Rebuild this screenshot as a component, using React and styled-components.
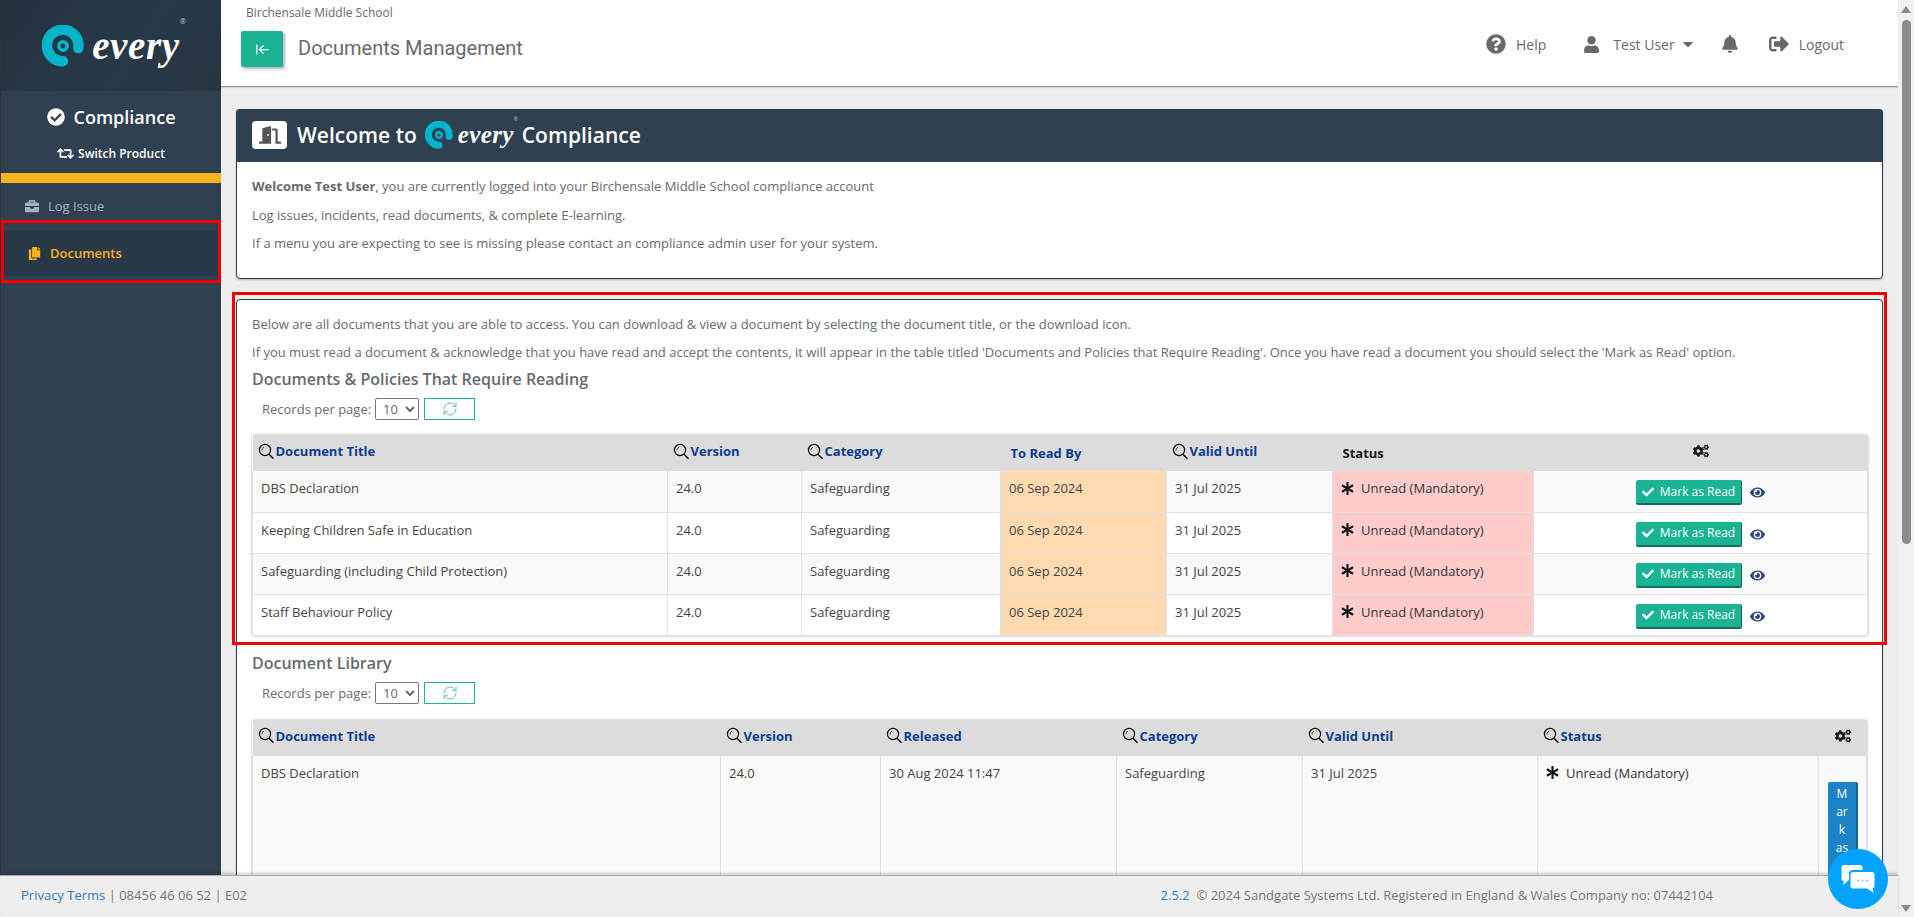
import React from 'react'
import styled, { createGlobalStyle } from 'styled-components'
import {
  FaQuestionCircle, FaUser, FaBell, FaSignOutAlt, FaCheckCircle, FaRetweet,
  FaBriefcase, FaCopy, FaCogs, FaAsterisk, FaCheck, FaEye, FaDoorOpen, FaCaretDown,
} from 'react-icons/fa'
import { ArrowLeftToLine, RefreshCw } from 'lucide-react'

const GlobalStyle = createGlobalStyle`
  html, body { margin: 0; height: 100%; overflow: hidden; }
  body { font-family: "Open Sans", "Liberation Sans", sans-serif; font-size: 13px; color: #676a6c; }
  * { box-sizing: border-box; }
`

const Shell = styled.div`
  display: flex;
  height: 917px;
  background: #eeeeee;
`
const Page = styled.div`
  flex: 1;
  min-width: 0;
  display: flex;
  flex-direction: column;
  position: relative;
`
const Body = styled.div`
  flex: 1;
  min-height: 0;
  display: flex;
`

/* sidebar */
const Sidebar = styled.aside`
  width: 221px;
  flex: none;
  background: #2f4050;
  color: #fff;
  border-left: 1px solid #333;
`
const LogoBlock = styled.div`
  height: 91px;
  background: linear-gradient(125deg, #24323f 0%, #293948 60%, #26343f 100%);
  display: flex;
  align-items: center;
  justify-content: center;
`
const LogoRow = styled.span`
  display: inline-flex;
  align-items: center;
  gap: ${p => p.$size * 0.2}px;
`
const LogoWord = styled.span`
  font-family: "Liberation Serif", serif;
  font-style: italic;
  font-weight: 700;
  font-size: ${p => p.$size}px;
  line-height: 1;
  letter-spacing: ${p => p.$size * 0.015}px;
  color: #fff;
  position: relative;
`
const LogoMarkR = styled.span`
  position: absolute;
  left: 100%;
  top: ${p => p.$size * -0.2}px;
  font-size: ${p => p.$size * 0.2}px;
  font-family: "Open Sans", sans-serif;
  font-style: normal;
  font-weight: 400;
  color: #b8c2cc;
`
const ProductBlock = styled.div`
  height: 82px;
  padding-top: 14px;
  text-align: center;
`
const ProductName = styled.div`
  display: flex;
  align-items: center;
  justify-content: center;
  gap: 9px;
  font-size: 18px;
  font-weight: 600;
  line-height: 24px;
`
const SwitchLink = styled.div`
  display: flex;
  align-items: center;
  justify-content: center;
  gap: 4px;
  margin-top: 16px;
  font-size: 12px;
  font-weight: 600;
  line-height: 16px;
`
const YellowBar = styled.div`
  height: 10px;
  background: #fbb21b;
`
const NavItem = styled.div`
  position: relative;
  height: ${p => (p.$active ? 46 : 47)}px;
  display: flex;
  align-items: center;
  gap: 9px;
  padding-left: 24px;
  padding-bottom: ${p => (p.$active ? 0 : 2)}px;
  font-size: 13px;
  font-weight: ${p => (p.$active ? 600 : 400)};
  color: ${p => (p.$active ? '#fbb21b' : '#a7b1c2')};
  background: ${p => (p.$active ? '#293846' : 'transparent')};
  border-left: ${p => (p.$active ? '1px solid #fbb21b' : 'none')};
  margin-left: ${p => (p.$active ? 2 : 0)}px;
`
const Highlight = styled.div`
  position: absolute;
  top: ${p => p.$top}px;
  left: ${p => p.$left}px;
  right: ${p => p.$right}px;
  bottom: ${p => p.$bottom}px;
  border: 3px solid #f00000;
  pointer-events: none;
`

/* header */
const Main = styled.div`
  flex: 1;
  min-width: 0;
  display: flex;
  flex-direction: column;
`
const TopBar = styled.header`
  height: 87px;
  flex: none;
  background: #fff;
  border-bottom: 1px solid #999;
  box-shadow: 0 1px 1px rgba(0, 0, 0, 0.12);
  padding: 4px 0 0 25px;
  display: flex;
  justify-content: space-between;
`
const School = styled.div`
  font-size: 12px;
  line-height: 17px;
`
const TitleRow = styled.div`
  display: flex;
  align-items: center;
  gap: 15px;
  margin: 10px 0 0 -5px;
`
const ToggleButton = styled.div`
  width: 42px;
  height: 36px;
  border-radius: 2px;
  background: #1ab394;
  color: #fff;
  display: flex;
  align-items: center;
  justify-content: center;
  box-shadow: 2px 2px 3px rgba(0, 0, 0, 0.3);
`
const PageTitle = styled.h1`
  margin: 0;
  padding-bottom: 2px;
  font-family: Roboto, sans-serif;
  font-size: 20px;
  font-weight: 400;
  color: #676a6c;
`
const UserNav = styled.nav`
  display: flex;
  align-items: center;
  height: 80px;
  padding-right: 54px;
  font-size: 14px;
  color: #676a6c;
`
const UserLink = styled.span`
  display: flex;
  align-items: center;
  gap: ${p => p.$gap}px;
  margin-left: ${p => p.$ml}px;
  svg { flex: none; }
`
const Caret = styled(FaCaretDown)`
  margin-left: -8px;
`

/* content */
const Content = styled.main`
  flex: 1;
  min-height: 0;
  overflow: hidden;
  padding: 22px 15px 0;
`
const Card = styled.section`
  background: #fff;
  border: 1px solid #2f4050;
  border-radius: 4px;
  box-shadow: 0 1px 2px rgba(0, 0, 0, 0.25);
  margin-bottom: 20px;
`
const CardHead = styled.div`
  height: 53px;
  margin: -1px -1px 0;
  background: #2f4050;
  border-radius: 4px 4px 0 0;
  color: #fff;
  display: flex;
  align-items: center;
  padding: 0 0 2px 16px;
  gap: 8px;
  font-size: 21px;
  font-weight: 600;
`
const DoorTile = styled.span`
  width: 35px;
  height: 28px;
  margin-right: 2px;
  background: #fff;
  border-radius: 4px;
  color: #555;
  display: flex;
  align-items: center;
  justify-content: center;
`
const WelcomeBody = styled.div`
  padding: 15px 15px 0;
  height: 116px;
`
const Para = styled.p`
  margin: 0 0 ${p => p.$mb ?? 10.5}px;
  line-height: 18px;
  color: #676a6c;
  b { font-weight: 700; }
`
const DocsBody = styled.div`
  padding: 15px 15px 0;
`
const HighlightZone = styled.div`
  position: relative;
`
const SectionTitle = styled.h3`
  margin: ${p => p.$mt}px 0 0;
  font-size: 16px;
  line-height: 22px;
  font-weight: 600;
  color: #676a6c;
`
const Toolbar = styled.div`
  display: flex;
  align-items: center;
  height: 22px;
  margin: 8px 0 ${p => p.$mb}px 10px;
  font-size: 13px;
`
const PerPage = styled.select`
  width: 44px;
  height: 22px;
  margin: 0 5px 0 4px;
  padding: 0 0 0 3px;
  background: #fff;
  border: 1px solid #777;
  border-radius: 2px;
  color: #676a6c;
  font: 13px "Open Sans", sans-serif;
`
const RefreshButton = styled.div`
  width: 51px;
  height: 22px;
  border: 1px solid #1ab394;
  display: flex;
  align-items: center;
  justify-content: center;
  color: #62c3a8;
`
const Table = styled.table`
  width: 100%;
  table-layout: fixed;
  border-collapse: collapse;
  box-shadow: 0 0 3px rgba(0, 0, 0, 0.3);
  border-radius: 3px;
`
const HeadCell = styled.th`
  height: 36px;
  padding: 0 5px;
  background: #dcdcdc;
  text-align: ${p => (p.$center ? 'center' : 'left')};
  font-size: 13px;
  font-weight: 700;
  color: ${p => (p.$plain ? '#1a1a1a' : '#0b3d91')};
  white-space: nowrap;
`
const HeadLabel = styled.span`
  display: inline-flex;
  align-items: center;
  gap: 1px;
  padding-left: ${p => (p.$indent ? 5 : 0)}px;
`
const Row = styled.tr`
  background: ${p => (p.$odd ? '#f9f9f9' : '#fff')};
`
const Cell = styled.td`
  height: ${p => p.$h}px;
  padding: 8px 8px 0;
  vertical-align: top;
  border: 1px solid #e1e1e1;
  border-top: 0;
  font-size: 13px;
  line-height: 18px;
  color: #444;
  background: ${p => p.$tint || 'transparent'};
`
const StatusText = styled.span`
  display: flex;
  align-items: center;
  gap: 7px;
  color: #333;
`
const ActionWrap = styled.div`
  display: flex;
  align-items: center;
  justify-content: center;
  gap: 8px;
  margin-top: 1px;
  color: #2f4a7a;
`
const MarkButton = styled.span`
  display: inline-flex;
  align-items: center;
  gap: 6px;
  height: 25px;
  padding: 0 6px;
  background: #1ab394;
  border-bottom: 2px solid #12705c;
  border-right: 1px solid #12705c;
  border-radius: 2px;
  color: #fff;
  font-size: 12px;
`
const NarrowButton = styled.span`
  display: block;
  width: 30px;
  margin: 18px 0 0 1px;
  padding: 3px 6px 0;
  background: #1c84c6;
  border-right: 2px solid #14608f;
  border-radius: 2px;
  color: #fff;
  font-size: 12px;
  line-height: 18px;
  text-align: center;
  word-break: break-all;
`

/* footer */
const Footer = styled.footer`
  height: 42px;
  flex: none;
  display: flex;
  align-items: center;
  justify-content: space-between;
  padding: 0 185px 3px 21px;
  background: #eeeeee;
  border-top: 1px solid #aaa;
  box-shadow: 0 -2px 3px rgba(0, 0, 0, 0.18);
  border-bottom-left-radius: 6px;
  font-size: 13px;
  color: #777;
  z-index: 1;
`
const FootLink = styled.span`
  color: #337ab7;
`
const ChatBubble = styled.div`
  position: absolute;
  right: 10px;
  bottom: 8px;
  width: 60px;
  height: 60px;
  border-radius: 50%;
  background: #03a2fd;
  display: flex;
  align-items: center;
  justify-content: center;
  z-index: 2;
`

/* window scrollbar drawn at the right edge */
const Scrollbar = styled.div`
  width: 16px;
  flex: none;
  background: #f1f1f1;
  display: flex;
  flex-direction: column;
  align-items: center;
  padding-top: 6px;
`
const Arrow = styled.span`
  width: 0;
  height: 0;
  border-left: 5px solid transparent;
  border-right: 5px solid transparent;
  border-bottom: ${p => (p.$down ? '0' : '7px solid #8a8a8a')};
  border-top: ${p => (p.$down ? '7px solid #8a8a8a' : '0')};
  margin-top: ${p => (p.$down ? 'auto' : '0')};
  margin-bottom: ${p => (p.$down ? '5px' : '0')};
`
const Thumb = styled.div`
  width: 9px;
  height: 524px;
  margin-top: 7px;
  border-radius: 5px;
  background: #8c8c8c;
`

function LogoMark({ size }) {
  return (
    <svg width={size} height={size} viewBox="0 0 40 40" fill="none">
      <path d="M34.5 22 A15 15 0 1 0 20 34.5" stroke="#00b4cc" strokeWidth="10" strokeLinecap="round" />
      <circle cx="20" cy="20" r="4" stroke="#00b4cc" strokeWidth="3.4" />
    </svg>
  )
}

function EveryLogo({ mark, size }) {
  return (
    <LogoRow $size={size}>
      <LogoMark size={mark} />
      <LogoWord $size={size}>every<LogoMarkR $size={size}>®</LogoMarkR></LogoWord>
    </LogoRow>
  )
}

function Magnifier() {
  return (
    <svg width="17" height="17" viewBox="0 0 17 17" fill="none" stroke="#111">
      <circle cx="7" cy="7" r="5.6" strokeWidth="1.2" />
      <path d="M11 11.2 L15.5 15.7" strokeWidth="1.6" />
      <path d="M4 7.5 C4 6 4.8 4.8 6 4.2" strokeWidth="0.8" />
    </svg>
  )
}

function ChatIcon() {
  return (
    <svg width="34" height="30" viewBox="0 0 34 30">
      <path d="M3 1 H19 a2.500 2.500 0 0 1 2.500 2.500 V6 H12 a4 4 0 0 0 -4 4 V16 L2 21 L3 17 a2.500 2.500 0 0 1 -2.500 -2.500 V3.500 A2.500 2.500 0 0 1 3 1 Z" fill="#fff" />
      <path d="M12 8 H31 a2.500 2.500 0 0 1 2.500 2.500 V22 a2.500 2.500 0 0 1 -2 2.400 L33 29 L26 24.500 H12 a2.500 2.500 0 0 1 -2.500 -2.500 V10.500 A2.500 2.500 0 0 1 12 8 Z" fill="#fff" />
      <circle cx="17" cy="16.500" r="1" fill="#6cc4f7" />
      <circle cx="21.500" cy="16.500" r="1" fill="#6cc4f7" />
      <circle cx="26" cy="16.500" r="1" fill="#6cc4f7" />
    </svg>
  )
}

function RecordsBar({ gapBelow }) {
  return (
    <Toolbar $mb={gapBelow}>
      Records per page:
      <PerPage defaultValue="10">
        <option>10</option>
      </PerPage>
      <RefreshButton><RefreshCw size={16} strokeWidth={1.5} /></RefreshButton>
    </Toolbar>
  )
}

function Head({ children, search = true }) {
  return (
    <HeadLabel $indent={!search}>
      {search && <Magnifier />}
      {children}
    </HeadLabel>
  )
}

const requiredDocs = [
  'DBS Declaration',
  'Keeping Children Safe in Education',
  'Safeguarding (including Child Protection)',
  'Staff Behaviour Policy',
]

function Unread() {
  return (
    <StatusText>
      <FaAsterisk size={13} color="#111" />
      Unread (Mandatory)
    </StatusText>
  )
}

export default function App() {
  return (
    <Shell>
      <GlobalStyle />
      <Page>
        <Body>
          <Sidebar>
            <LogoBlock><EveryLogo mark={42} size={39} /></LogoBlock>
            <ProductBlock>
              <ProductName><FaCheckCircle size={18} />Compliance</ProductName>
              <SwitchLink><FaRetweet size={17} />Switch Product</SwitchLink>
            </ProductBlock>
            <YellowBar />
            <NavItem><FaBriefcase size={14} />Log Issue</NavItem>
            <NavItem $active>
              <FaCopy size={13} />Documents
              <Highlight $top={-10} $left={-3} $right={0} $bottom={-7} />
            </NavItem>
          </Sidebar>
          <Main>
            <TopBar>
              <div>
                <School>Birchensale Middle School</School>
                <TitleRow>
                  <ToggleButton><ArrowLeftToLine size={15} strokeWidth={2} /></ToggleButton>
                  <PageTitle>Documents Management</PageTitle>
                </TitleRow>
              </div>
              <UserNav>
                <UserLink $gap={10} $ml={0}><FaQuestionCircle size={20} />Help</UserLink>
                <UserLink $gap={13} $ml={37}><FaUser size={17} />Test User<Caret size={16} /></UserLink>
                <UserLink $gap={0} $ml={25}><FaBell size={18} /></UserLink>
                <UserLink $gap={10} $ml={30}><FaSignOutAlt size={20} />Logout</UserLink>
              </UserNav>
            </TopBar>
            <Content>
              <Card>
                <CardHead>
                  <DoorTile><FaDoorOpen size={22} /></DoorTile>
                  Welcome to
                  <EveryLogo mark={28} size={25} />
                  Compliance
                </CardHead>
                <WelcomeBody>
                  <Para><b>Welcome Test User</b>, you are currently logged into your Birchensale Middle School compliance account</Para>
                  <Para>Log issues, incidents, read documents, &amp; complete E-learning.</Para>
                  <Para>If a menu you are expecting to see is missing please contact an compliance admin user for your system.</Para>
                </WelcomeBody>
              </Card>
              <Card>
                <DocsBody>
                  <HighlightZone>
                    <Highlight $top={-23} $left={-20} $right={-20} $bottom={-9} />
                    <Para $mb={10}>Below are all documents that you are able to access. You can download &amp; view a document by selecting the document title, or the download icon.</Para>
                    <Para $mb={0}>If you must read a document &amp; acknowledge that you have read and accept the contents, it will appear in the table titled 'Documents and Policies that Require Reading'. Once you have read a document you should select the 'Mark as Read' option.</Para>
                    <SectionTitle $mt={7}>Documents &amp; Policies That Require Reading</SectionTitle>
                    <RecordsBar gapBelow={15} />
                    <Table>
                      <colgroup>
                        {[415, 134, 199, 166, 166, 201, 334].map(w => <col key={w} width={w} />)}
                      </colgroup>
                      <thead>
                        <tr>
                          <HeadCell><Head>Document Title</Head></HeadCell>
                          <HeadCell><Head>Version</Head></HeadCell>
                          <HeadCell><Head>Category</Head></HeadCell>
                          <HeadCell><Head search={false}>To Read By</Head></HeadCell>
                          <HeadCell><Head>Valid Until</Head></HeadCell>
                          <HeadCell $plain><Head search={false}>Status</Head></HeadCell>
                          <HeadCell $plain $center><FaCogs size={16} /></HeadCell>
                        </tr>
                      </thead>
                      <tbody>
                        {requiredDocs.map((title, i) => (
                          <Row key={title} $odd={i % 2 === 0}>
                            <Cell $h={41}>{title}</Cell>
                            <Cell $h={41}>24.0</Cell>
                            <Cell $h={41}>Safeguarding</Cell>
                            <Cell $h={41} $tint="#ffd9b0">06 Sep 2024</Cell>
                            <Cell $h={41}>31 Jul 2025</Cell>
                            <Cell $h={41} $tint="#ffcccc"><Unread /></Cell>
                            <Cell $h={41}>
                              <ActionWrap>
                                <MarkButton><FaCheck size={12} />Mark as Read</MarkButton>
                                <FaEye size={15} />
                              </ActionWrap>
                            </Cell>
                          </Row>
                        ))}
                      </tbody>
                    </Table>
                  </HighlightZone>
                  <SectionTitle $mt={16}>Document Library</SectionTitle>
                  <RecordsBar gapBelow={16} />
                  <Table>
                    <colgroup>
                      {[468, 160, 236, 186, 235, 281, 48].map(w => <col key={w} width={w} />)}
                    </colgroup>
                    <thead>
                      <tr>
                        <HeadCell><Head>Document Title</Head></HeadCell>
                        <HeadCell><Head>Version</Head></HeadCell>
                        <HeadCell><Head>Released</Head></HeadCell>
                        <HeadCell><Head>Category</Head></HeadCell>
                        <HeadCell><Head>Valid Until</Head></HeadCell>
                        <HeadCell><Head>Status</Head></HeadCell>
                        <HeadCell $plain $center><FaCogs size={16} /></HeadCell>
                      </tr>
                    </thead>
                    <tbody>
                      <Row $odd>
                        <Cell $h={200}>DBS Declaration</Cell>
                        <Cell $h={200}>24.0</Cell>
                        <Cell $h={200}>30 Aug 2024 11:47</Cell>
                        <Cell $h={200}>Safeguarding</Cell>
                        <Cell $h={200}>31 Jul 2025</Cell>
                        <Cell $h={200}><Unread /></Cell>
                        <Cell $h={200}><NarrowButton>Mark as Read</NarrowButton></Cell>
                      </Row>
                    </tbody>
                  </Table>
                </DocsBody>
              </Card>
            </Content>
          </Main>
        </Body>
        <Footer>
          <span><FootLink>Privacy Terms</FootLink> | 08456 46 06 52 | E02</span>
          <span><FootLink>2.5.2</FootLink> &nbsp;© 2024 Sandgate Systems Ltd. Registered in England &amp; Wales Company no: 07442104</span>
        </Footer>
        <ChatBubble><ChatIcon /></ChatBubble>
      </Page>
      <Scrollbar>
        <Arrow />
        <Thumb />
        <Arrow $down />
      </Scrollbar>
    </Shell>
  )
}
